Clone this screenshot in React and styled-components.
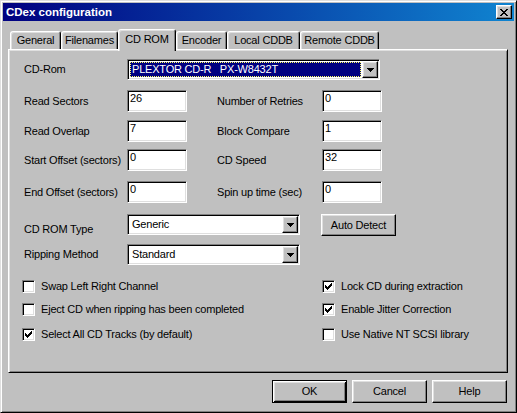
import React from "react";
import styled, { createGlobalStyle, css } from "styled-components";

const GlobalStyle = createGlobalStyle`
  *, *::before, *::after { box-sizing: border-box; }
  html, body { margin: 0; padding: 0; background: #c0c0c0; }
  body {
    font-family: "Liberation Sans", Arial, sans-serif;
    font-size: 11px;
    letter-spacing: -0.2px;
    color: #000;
  }
`;

const raised = css`
  border: 1px solid;
  border-color: #fff #000 #000 #fff;
  box-shadow: inset -1px -1px #808080, inset 1px 1px #dfdfdf;
`;

const sunken = css`
  border: 1px solid;
  border-color: #808080 #fff #fff #808080;
  box-shadow: inset 1px 1px #000, inset -1px -1px #dfdfdf;
`;

const Window = styled.div`
  width: 517px;
  height: 413px;
  border: 1px solid;
  border-color: #dfdfdf #000 #000 #dfdfdf;
  box-shadow: inset 1px 1px #fff, inset -1px -1px #808080;
  padding: 2px;
  background: #c0c0c0;
  display: flex;
  flex-direction: column;
`;

const TitleBar = styled.div`
  height: 18px;
  flex: none;
  display: flex;
  align-items: center;
  padding: 0 2px 0 3px;
  background: linear-gradient(to right, #000080, #1084d0);
`;

const Title = styled.span`
  color: #fff;
  font-weight: bold;
  font-size: 11.5px;
  letter-spacing: 0;
  line-height: 14px;
  white-space: nowrap;
`;

const CloseButton = styled.div`
  ${raised}
  margin-left: auto;
  width: 16px;
  height: 14px;
  background: #c0c0c0;
  display: flex;
  align-items: center;
  justify-content: center;
  padding-right: 1px;
`;

const GlyphSvg = styled.svg`
  display: block;
  flex: none;
`;

const Body = styled.div`
  flex: 1;
  display: flex;
  flex-direction: column;
  padding: 8px 6px 0 5px;
`;

const TabRow = styled.div`
  display: flex;
  align-items: flex-end;
  height: 20px;
  padding-left: 2px;
  position: relative;
  z-index: 1;
  flex: none;
`;

const Tab = styled.div`
  flex: none;
  width: ${(p) => p.$w}px;
  height: ${(p) => (p.$active ? 22 : 18)}px;
  margin-bottom: ${(p) => (p.$active ? -2 : 0)}px;
  padding-bottom: ${(p) => (p.$active ? 2 : 0)}px;
  background: #c0c0c0;
  border: 1px solid;
  border-bottom: none;
  border-color: #fff #000 transparent #fff;
  border-radius: 3px 3px 0 0;
  box-shadow: inset 1px 1px #dfdfdf, inset -1px 0 #808080;
  display: flex;
  align-items: center;
  justify-content: center;
  white-space: nowrap;
  line-height: 13px;
`;

const Panel = styled.div`
  height: 324px;
  flex: none;
  border: 1px solid;
  border-color: #fff #000 #000 #fff;
  box-shadow: inset 1px 1px #dfdfdf, inset -1px -1px #808080;
  padding: 0 0 0 15px;
  display: flex;
  flex-direction: column;
`;

const Row = styled.div`
  display: flex;
  align-items: ${(p) => p.$align || "center"};
  margin-top: ${(p) => p.$mt}px;
  flex: none;
`;

const Label = styled.span`
  flex: none;
  width: ${(p) => p.$w}px;
  margin-left: ${(p) => p.$ml || 0}px;
  padding-top: ${(p) => p.$pt || 0}px;
  line-height: 13px;
  white-space: nowrap;
`;

const Field = styled.div`
  ${sunken}
  flex: none;
  width: 60px;
  height: 22px;
  background: #fff;
  padding: 1px 0 0 2px;
  line-height: 13px;
`;

const Combo = styled.div`
  ${sunken}
  flex: none;
  width: ${(p) => p.$w}px;
  height: 21px;
  background: #fff;
  padding: 1px;
  display: flex;
`;

const ComboValue = styled.div`
  flex: 1;
  margin: 1px 1px 1px 1px;
  padding-left: 1px;
  line-height: 13px;
  border: 1px dotted ${(p) => (p.$focused ? "#ffff60" : "transparent")};
  background: ${(p) => (p.$focused ? "#000080" : "transparent")};
  color: ${(p) => (p.$focused ? "#fff" : "#000")};
  white-space: pre;
  overflow: hidden;
`;

const DropButton = styled.div`
  ${raised}
  flex: none;
  width: 16px;
  height: 17px;
  background: #c0c0c0;
  display: flex;
  align-items: center;
  justify-content: center;
`;

const PushButton = styled.div`
  flex: none;
  width: ${(p) => p.$w || 75}px;
  height: ${(p) => p.$h || 23}px;
  margin-left: ${(p) => p.$ml || 0}px;
  background: #c0c0c0;
  display: flex;
  align-items: center;
  justify-content: center;
  line-height: 13px;
  white-space: nowrap;
  ${(p) =>
    p.$default
      ? css`
          border: 1px solid #000;
          box-shadow: inset 1px 1px #fff, inset -1px -1px #000,
            inset 2px 2px #dfdfdf, inset -2px -2px #808080;
        `
      : raised}
`;

const CheckRow = styled.div`
  display: grid;
  grid-template-columns: 300px 1fr;
  margin: ${(p) => p.$mt}px 0 0 -2px;
  flex: none;
`;

const CheckItem = styled.div`
  display: flex;
  align-items: center;
  gap: 6px;
  line-height: 13px;
  white-space: nowrap;
`;

const CheckBox = styled.div`
  ${sunken}
  flex: none;
  width: 13px;
  height: 13px;
  background: #fff;
  display: flex;
  align-items: center;
  justify-content: center;
`;

const Footer = styled.div`
  display: flex;
  justify-content: flex-end;
  gap: 5px;
  margin-top: 7px;
  padding-right: 1px;
  flex: none;
`;

const PixelGlyph = ({ rows }) => {
  const w = rows[0].length;
  const h = rows.length;
  return (
    <GlyphSvg width={w} height={h} viewBox={`0 0 ${w} ${h}`} shapeRendering="crispEdges">
      {rows.flatMap((r, y) =>
        [...r].map((c, x) =>
          c === "#" ? <rect key={`${x}-${y}`} x={x} y={y} width="1" height="1" fill="#000" /> : null
        )
      )}
    </GlyphSvg>
  );
};

const CLOSE_X = [
  "##....##",
  ".##..##.",
  "..####..",
  "...##...",
  "..####..",
  ".##..##.",
  "##....##",
];

const ARROW = ["#######", ".#####.", "..###..", "...#..."];

const CHECK = [
  "......#",
  ".....##",
  "#...###",
  "##.###.",
  "#####..",
  ".###...",
  "..#....",
];

const Select = ({ w, value, focused }) => (
  <Combo $w={w}>
    <ComboValue $focused={focused}>{value}</ComboValue>
    <DropButton>
      <PixelGlyph rows={ARROW} />
    </DropButton>
  </Combo>
);

const Check = ({ checked, label }) => (
  <CheckItem>
    <CheckBox>{checked && <PixelGlyph rows={CHECK} />}</CheckBox>
    <span>{label}</span>
  </CheckItem>
);

const tabs = [
  ["General", 51],
  ["Filenames", 57],
  ["CD ROM", 58, true],
  ["Encoder", 51],
  ["Local CDDB", 73],
  ["Remote CDDB", 79],
];

const fieldRows = [
  { mt: 10, l: "Read Sectors", lv: "26", r: "Number of Retries", rv: "0" },
  { mt: 8, l: "Read Overlap", lv: "7", r: "Block Compare", rv: "1" },
  { mt: 7, l: "Start Offset (sectors)", lv: "0", r: "CD Speed", rv: "32" },
  { mt: 10, l: "End Offset (sectors)", lv: "0", r: "Spin up time (sec)", rv: "0" },
];

const checkRows = [
  { mt: 15, l: ["Swap Left Right Channel", false], r: ["Lock CD during extraction", true] },
  { mt: 10, l: ["Eject CD when ripping has been completed", false], r: ["Enable Jitter Correction", true] },
  { mt: 12, l: ["Select All CD Tracks (by default)", true], r: ["Use Native NT SCSI library", false] },
];

export default function App() {
  return (
    <>
      <GlobalStyle />
      <Window>
        <TitleBar>
          <Title>CDex configuration</Title>
          <CloseButton>
            <PixelGlyph rows={CLOSE_X} />
          </CloseButton>
        </TitleBar>
        <Body>
          <TabRow>
            {tabs.map(([name, w, active]) => (
              <Tab key={name} $w={w} $active={active}>
                {name}
              </Tab>
            ))}
          </TabRow>
          <Panel>
            <Row $mt={9}>
              <Label $w={103}>CD-Rom</Label>
              <Select w={253} value={"PLEXTOR CD-R   PX-W8432T"} focused />
            </Row>
            {fieldRows.map((r) => (
              <Row key={r.l} $mt={r.mt}>
                <Label $w={103}>{r.l}</Label>
                <Field>{r.lv}</Field>
                <Label $w={105} $ml={30}>
                  {r.r}
                </Label>
                <Field>{r.rv}</Field>
              </Row>
            ))}
            <Row $mt={11} $align="flex-start">
              <Label $w={103} $pt={9}>
                CD ROM Type
              </Label>
              <Select w={173} value="Generic" />
              <PushButton $w={75} $h={22} $ml={21}>
                Auto Detect
              </PushButton>
            </Row>
            <Row $mt={8}>
              <Label $w={103}>Ripping Method</Label>
              <Select w={173} value="Standard" />
            </Row>
            {checkRows.map((r) => (
              <CheckRow key={r.l[0]} $mt={r.mt}>
                <Check label={r.l[0]} checked={r.l[1]} />
                <Check label={r.r[0]} checked={r.r[1]} />
              </CheckRow>
            ))}
          </Panel>
          <Footer>
            <PushButton $default>OK</PushButton>
            <PushButton>Cancel</PushButton>
            <PushButton>Help</PushButton>
          </Footer>
        </Body>
      </Window>
    </>
  );
}
